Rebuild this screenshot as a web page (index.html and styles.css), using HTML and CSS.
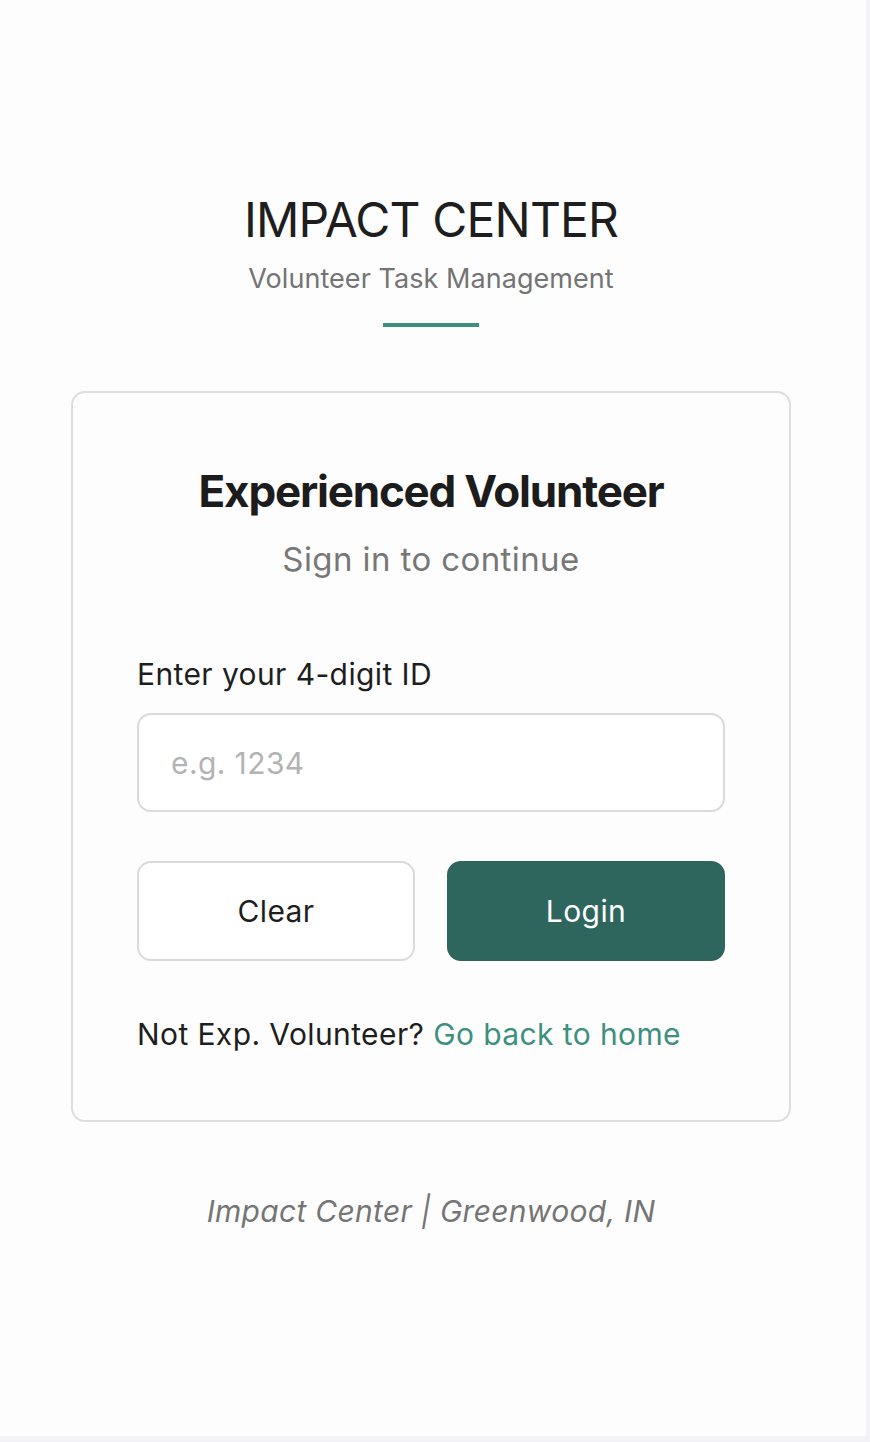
FILE: index.html
```html
<!DOCTYPE html>
<html lang="en">
<head>
<meta charset="utf-8">
<title>Impact Center - Experienced Volunteer Login</title>
<link rel="stylesheet" href="styles.css">
</head>
<body>
<div class="page">
  <main class="column">
    <header class="brand">
      <h1 class="brand-title">IMPACT CENTER</h1>
      <p class="brand-sub">Volunteer Task Management</p>
      <div class="brand-rule"></div>
    </header>

    <section class="card">
      <h2 class="card-title">Experienced Volunteer</h2>
      <p class="card-sub">Sign in to continue</p>

      <label class="field-label" for="vid">Enter your 4-digit ID</label>
      <input class="field-input" id="vid" type="text" placeholder="e.g. 1234">

      <div class="actions">
        <button class="btn btn-clear" type="button">Clear</button>
        <button class="btn btn-login" type="button">Login</button>
      </div>

      <p class="alt">Not Exp. Volunteer? <a class="alt-link" href="#">Go back to home</a></p>
    </section>

    <footer class="foot">Impact Center | Greenwood, IN</footer>
  </main>
</div>
</body>
</html>
```

FILE: styles.css
```css
* { box-sizing: border-box; }

html, body {
  margin: 0;
  padding: 0;
  background: #f2f2f7;
}

body {
  font-family: "Inter", "Liberation Sans", Arial, sans-serif;
  color: #1e1e1e;
}

.page {
  width: 866px;
  height: 1436px;
  background: #fdfdfd;
  padding-right: 4px;
}

.column {
  display: flex;
  flex-direction: column;
  align-items: center;
  padding-top: 191px;
}

.brand {
  display: flex;
  flex-direction: column;
  align-items: center;
}

.brand-title {
  margin: 0;
  font-size: 48px;
  line-height: 58px;
  font-weight: 400;
  color: #1e1e1e;
  letter-spacing: -0.85px;
}

.brand-sub {
  margin: 14px 0 0;
  font-size: 27px;
  line-height: 32px;
  color: #747474;
  letter-spacing: 0.05px;
}

.brand-rule {
  margin-top: 28px;
  width: 96px;
  height: 4px;
  background: #3f8f80;
}

.card {
  margin-top: 64px;
  width: 720px;
  border: 2px solid #dedede;
  border-radius: 14px;
  background: #fdfdfd;
  padding: 72px 64px 68px;
  display: flex;
  flex-direction: column;
}

.card-title {
  margin: 0;
  text-align: center;
  font-size: 44px;
  line-height: 52px;
  font-weight: 700;
  letter-spacing: -1.2px;
  color: #1c1c1c;
}

.card-sub {
  margin: 22px 0 0;
  text-align: center;
  font-size: 33px;
  line-height: 40px;
  color: #777777;
  letter-spacing: 0.4px;
}

.field-label {
  margin-top: 77px;
  font-size: 30px;
  line-height: 36px;
  color: #1e1e1e;
  letter-spacing: 0.4px;
}

.field-input {
  margin-top: 21px;
  width: 100%;
  height: 99px;
  border: 2px solid #dadada;
  border-radius: 14px;
  background: #ffffff;
  padding: 0 32px;
  font-family: inherit;
  font-size: 30px;
  letter-spacing: 0.4px;
  color: #1e1e1e;
  outline: none;
}

.field-input::placeholder {
  color: #b3b3b3;
}

.actions {
  margin-top: 49px;
  display: grid;
  grid-template-columns: 1fr 1fr;
  gap: 32px;
}

.btn {
  height: 100px;
  border-radius: 14px;
  font-family: inherit;
  font-size: 30px;
  letter-spacing: 0.4px;
  cursor: pointer;
}

.btn-clear {
  background: #ffffff;
  border: 2px solid #dadada;
  color: #1e1e1e;
}

.btn-login {
  background: #2e665e;
  border: 2px solid #2e665e;
  color: #ffffff;
}

.alt {
  margin: 55px 0 0;
  font-size: 30px;
  line-height: 36px;
  color: #1e1e1e;
  letter-spacing: 0.4px;
}

.alt-link {
  color: #3d8f80;
  text-decoration: none;
}

.foot {
  margin-top: 71px;
  font-size: 30px;
  line-height: 36px;
  font-style: italic;
  color: #757575;
  letter-spacing: 0.3px;
}
```
